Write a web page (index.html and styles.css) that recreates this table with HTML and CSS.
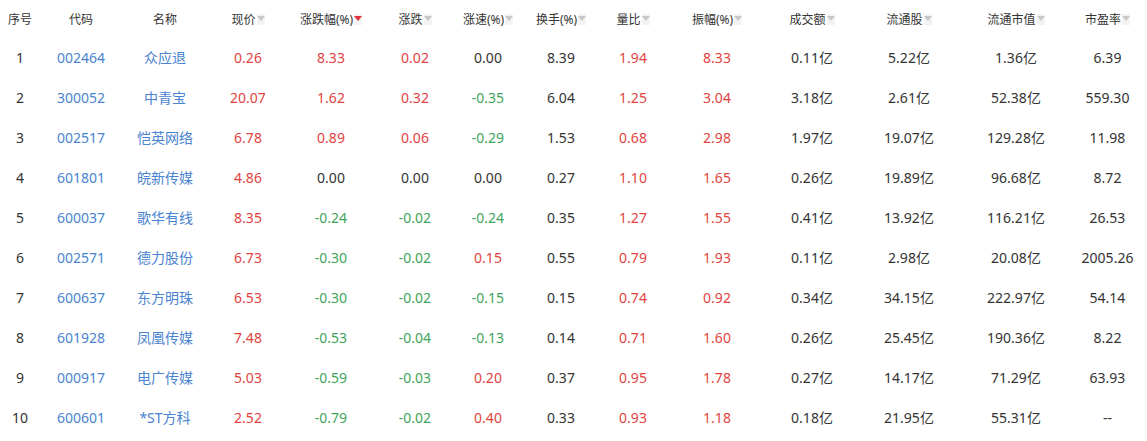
FILE: index.html
```html
<!DOCTYPE html>
<html lang="zh-CN">
<head>
<meta charset="utf-8">
<title>行情列表</title>
<link rel="stylesheet" href="styles.css">
</head>
<body>
<table class="quotes">
  <colgroup>
    <col class="w40"><col class="w82"><col class="w86"><col class="w80"><col class="w86"><col class="w82"><col class="w64"><col class="w82"><col class="w62"><col class="w106"><col class="w84"><col class="w110"><col class="w104"><col class="w79">
  </colgroup>
  <thead>
    <tr>
      <th>序号</th>
      <th>代码</th>
      <th>名称</th>
      <th>现价<span class="sort"></span></th>
      <th>涨跌幅(%)<span class="sort active"></span></th>
      <th>涨跌<span class="sort"></span></th>
      <th>涨速(%)<span class="sort"></span></th>
      <th>换手(%)<span class="sort"></span></th>
      <th>量比<span class="sort"></span></th>
      <th>振幅(%)<span class="sort"></span></th>
      <th>成交额<span class="sort"></span></th>
      <th>流通股<span class="sort"></span></th>
      <th>流通市值<span class="sort"></span></th>
      <th>市盈率<span class="sort"></span></th>
    </tr>
  </thead>
  <tbody>
    <tr><td>1</td><td class="link">002464</td><td class="link">众应退</td><td class="up">0.26</td><td class="up">8.33</td><td class="up">0.02</td><td>0.00</td><td>8.39</td><td class="up">1.94</td><td class="up">8.33</td><td>0.11亿</td><td>5.22亿</td><td>1.36亿</td><td>6.39</td></tr>
    <tr><td>2</td><td class="link">300052</td><td class="link">中青宝</td><td class="up">20.07</td><td class="up">1.62</td><td class="up">0.32</td><td class="down">-0.35</td><td>6.04</td><td class="up">1.25</td><td class="up">3.04</td><td>3.18亿</td><td>2.61亿</td><td>52.38亿</td><td>559.30</td></tr>
    <tr><td>3</td><td class="link">002517</td><td class="link">恺英网络</td><td class="up">6.78</td><td class="up">0.89</td><td class="up">0.06</td><td class="down">-0.29</td><td>1.53</td><td class="up">0.68</td><td class="up">2.98</td><td>1.97亿</td><td>19.07亿</td><td>129.28亿</td><td>11.98</td></tr>
    <tr><td>4</td><td class="link">601801</td><td class="link">皖新传媒</td><td class="up">4.86</td><td>0.00</td><td>0.00</td><td>0.00</td><td>0.27</td><td class="up">1.10</td><td class="up">1.65</td><td>0.26亿</td><td>19.89亿</td><td>96.68亿</td><td>8.72</td></tr>
    <tr><td>5</td><td class="link">600037</td><td class="link">歌华有线</td><td class="up">8.35</td><td class="down">-0.24</td><td class="down">-0.02</td><td class="down">-0.24</td><td>0.35</td><td class="up">1.27</td><td class="up">1.55</td><td>0.41亿</td><td>13.92亿</td><td>116.21亿</td><td>26.53</td></tr>
    <tr><td>6</td><td class="link">002571</td><td class="link">德力股份</td><td class="up">6.73</td><td class="down">-0.30</td><td class="down">-0.02</td><td class="up">0.15</td><td>0.55</td><td class="up">0.79</td><td class="up">1.93</td><td>0.11亿</td><td>2.98亿</td><td>20.08亿</td><td>2005.26</td></tr>
    <tr><td>7</td><td class="link">600637</td><td class="link">东方明珠</td><td class="up">6.53</td><td class="down">-0.30</td><td class="down">-0.02</td><td class="down">-0.15</td><td>0.15</td><td class="up">0.74</td><td class="up">0.92</td><td>0.34亿</td><td>34.15亿</td><td>222.97亿</td><td>54.14</td></tr>
    <tr><td>8</td><td class="link">601928</td><td class="link">凤凰传媒</td><td class="up">7.48</td><td class="down">-0.53</td><td class="down">-0.04</td><td class="down">-0.13</td><td>0.14</td><td class="up">0.71</td><td class="up">1.60</td><td>0.26亿</td><td>25.45亿</td><td>190.36亿</td><td>8.22</td></tr>
    <tr><td>9</td><td class="link">000917</td><td class="link">电广传媒</td><td class="up">5.03</td><td class="down">-0.59</td><td class="down">-0.03</td><td class="up">0.20</td><td>0.37</td><td class="up">0.95</td><td class="up">1.78</td><td>0.27亿</td><td>14.17亿</td><td>71.29亿</td><td>63.93</td></tr>
    <tr><td>10</td><td class="link">600601</td><td class="link">*ST方科</td><td class="up">2.52</td><td class="down">-0.79</td><td class="down">-0.02</td><td class="up">0.40</td><td>0.33</td><td class="up">0.93</td><td class="up">1.18</td><td>0.18亿</td><td>21.95亿</td><td>55.31亿</td><td>--</td></tr>
  </tbody>
</table>
</body>
</html>
```
FILE: styles.css
```css
html, body {
  margin: 0;
  padding: 0;
  background: #fff;
}
body {
  font-family: "Noto Sans", "Noto Sans CJK SC", sans-serif;
  color: #333;
}
.quotes {
  width: 1147px;
  table-layout: fixed;
  border-collapse: collapse;
}
.w40 { width: 40px; }
.w62 { width: 62px; }
.w64 { width: 64px; }
.w79 { width: 79px; }
.w80 { width: 80px; }
.w82 { width: 82px; }
.w84 { width: 84px; }
.w86 { width: 86px; }
.w104 { width: 104px; }
.w106 { width: 106px; }
.w110 { width: 110px; }
.quotes th {
  height: 37px;
  padding: 0;
  font-size: 12px;
  font-weight: normal;
  color: #333;
  text-align: center;
  white-space: nowrap;
}
.quotes td {
  height: 40px;
  padding: 0;
  font-size: 14px;
  text-align: center;
  white-space: nowrap;
}
.sort {
  display: inline-block;
  position: relative;
  width: 8px;
  height: 11px;
  margin-left: 1px;
  background: #f3f3f3;
  vertical-align: -1px;
}
.sort::after {
  content: "";
  position: absolute;
  left: 0;
  top: 2px;
  border-left: 4px solid transparent;
  border-right: 4px solid transparent;
  border-top: 5px solid #c8c8c8;
}
.sort.active::after {
  border-top-color: #e0303a;
}
.link { color: #4a83cf; }
.up { color: #e2433f; }
.down { color: #3fa55a; }
```
